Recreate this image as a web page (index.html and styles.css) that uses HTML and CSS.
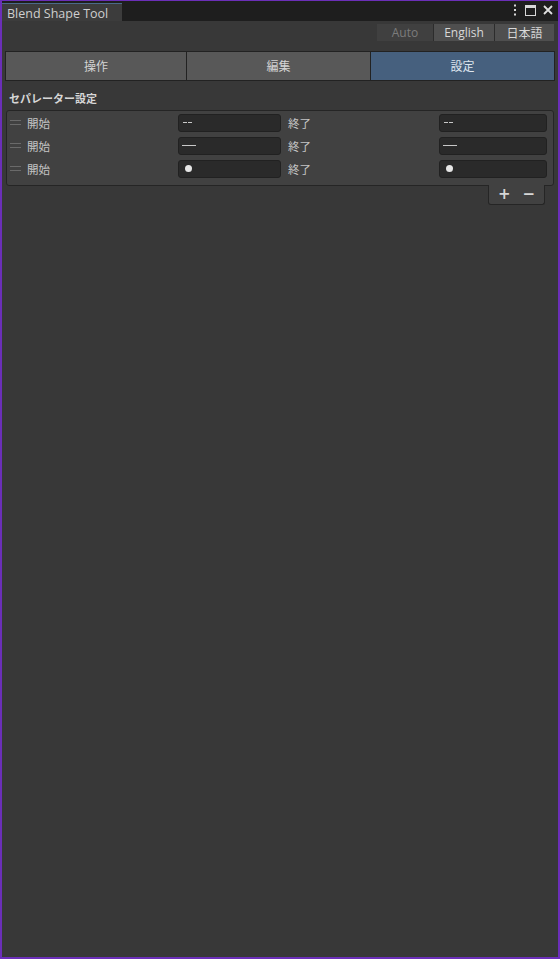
FILE: index.html
```html
<!DOCTYPE html>
<html lang="ja">
<head>
<meta charset="utf-8">
<title>Blend Shape Tool</title>
<link rel="stylesheet" href="styles.css">
</head>
<body>
<div class="window">
  <div class="titlebar">
    <div class="tab">Blend Shape Tool</div>
    <div class="win-icons">
      <svg class="ic" width="6" height="12" viewBox="0 0 6 12"><rect x="2" y="0.5" width="2" height="2" fill="#d8d8d8"/><rect x="2" y="5" width="2" height="2" fill="#d8d8d8"/><rect x="2" y="9.5" width="2" height="2" fill="#d8d8d8"/></svg>
      <svg class="ic" width="11" height="11" viewBox="0 0 11 11"><rect x="0.5" y="0.5" width="10" height="10" fill="none" stroke="#d8d8d8"/><rect x="0.5" y="0.5" width="10" height="2.5" fill="#d8d8d8"/></svg>
      <svg class="ic" width="10" height="10" viewBox="0 0 10 10"><path d="M1 1 L9 9 M9 1 L1 9" stroke="#e0e0e0" stroke-width="1.8"/></svg>
    </div>
  </div>
  <div class="content">
    <div class="lang-row">
      <div class="lang">
        <span class="lang-btn lang-auto">Auto</span>
        <span class="lang-btn lang-en">English</span>
        <span class="lang-btn lang-ja">日本語</span>
      </div>
    </div>
    <div class="tabs">
      <div class="tabbtn">操作</div>
      <div class="tabbtn">編集</div>
      <div class="tabbtn active">設定</div>
    </div>
    <div class="section-title">セパレーター設定</div>
    <div class="list">
      <div class="row">
        <span class="handle"></span>
        <span class="label">開始</span>
        <span class="field"><span class="dash2"></span></span>
        <span class="label label2">終了</span>
        <span class="field"><span class="dash2"></span></span>
      </div>
      <div class="row">
        <span class="handle"></span>
        <span class="label">開始</span>
        <span class="field"><span class="dashlong"></span></span>
        <span class="label label2">終了</span>
        <span class="field"><span class="dashlong"></span></span>
      </div>
      <div class="row">
        <span class="handle"></span>
        <span class="label">開始</span>
        <span class="field"><span class="dot"></span></span>
        <span class="label label2">終了</span>
        <span class="field"><span class="dot"></span></span>
      </div>
    </div>
    <div class="list-footer">
      <div class="pm">
        <span class="pm-btn">+</span>
        <span class="pm-btn">−</span>
      </div>
    </div>
  </div>
</div>
</body>
</html>
```

FILE: styles.css
```css
* { box-sizing: border-box; }
html, body { margin: 0; padding: 0; background: #383838; }
body {
  font-family: "Noto Sans CJK JP", "Noto Sans", "DejaVu Sans", sans-serif;
  color: #c8c8c8;
}
.window {
  width: 560px;
  height: 959px;
  border: 2px solid #6b2fb8;
  border-top-width: 1px;
  background: #383838;
  display: flex;
  flex-direction: column;
  overflow: hidden;
}
.titlebar {
  height: 20px;
  background: #1e1e1e;
  display: flex;
  align-items: flex-end;
  justify-content: space-between;
}
.tab {
  width: 120px;
  height: 18px;
  background: #3c3c3c;
  border-top: 1px solid #4b6a8a;
  color: #cfcfcf;
  font-family: "Open Sans", "DejaVu Sans", sans-serif;
  font-size: 12.5px;
  line-height: 19px;
  padding-left: 5px;
  white-space: nowrap;
}
.win-icons {
  display: flex;
  align-items: center;
  gap: 7px;
  height: 20px;
  padding-right: 5px;
  padding-bottom: 2px;
}
.ic { display: block; }
.content {
  flex: 1;
  padding: 3px 3px 0 3px;
  display: flex;
  flex-direction: column;
}
.lang-row {
  display: flex;
  justify-content: flex-end;
  padding-right: 1px;
}
.lang {
  display: flex;
  height: 17px;
  gap: 1px;
  background: #2c2c2c;
}
.lang-btn {
  font-family: "Open Sans", "DejaVu Sans", sans-serif;
  font-size: 12px;
  line-height: 17px;
  text-align: center;
  color: #d8d8d8;
  background: #4f4f4f;
}
.lang-auto { width: 56px; background: #404040; color: #7c7c7c; }
.lang-en { width: 60px; }
.lang-ja { width: 59px; font-family: "Noto Sans CJK JP", sans-serif; }
.tabs {
  margin-top: 10px;
  display: flex;
  height: 30px;
  border: 1px solid #222;
  background: #222;
  gap: 1px;
}
.tabbtn {
  background: #585858;
  color: #d4d4d4;
  font-size: 12px;
  line-height: 28px;
  text-align: center;
}
.tabbtn:nth-child(1) { width: 180px; }
.tabbtn:nth-child(2) { width: 183px; }
.tabbtn.active { flex: 1; background: #46607e; color: #dfe6ee; }
.section-title {
  margin-top: 9px;
  margin-left: 4px;
  font-size: 11px;
  font-weight: bold;
  color: #d6d6d6;
  line-height: 17px;
}
.list {
  margin-top: 3px;
  margin-left: 1px;
  margin-right: 1px;
  height: 76px;
  background: #414141;
  border: 1px solid #252525;
  border-radius: 3px;
  padding-top: 0;
}
.row {
  display: grid;
  grid-template-columns: 17px 151px 103px 158px 108px;
  align-items: center;
  height: 23px;
  padding-left: 3px;
}
.handle {
  width: 11px;
  height: 5px;
  border-top: 1px solid #6a6a6a;
  border-bottom: 1px solid #6a6a6a;
}
.label {
  font-size: 11.5px;
  color: #c4c4c4;
  line-height: 16px;
}
.label2 { padding-left: 7px; }
.field {
  height: 18px;
  background: #2a2a2a;
  border: 1px solid #212121;
  border-radius: 3px;
  padding-left: 3px;
  display: flex;
  align-items: center;
}
.dash2 {
  display: inline-block;
  width: 9px;
  height: 1px;
  margin-left: 1px;
  background: linear-gradient(to right, #c8c8c8 0 4px, transparent 4px 5px, #c8c8c8 5px 9px);
}
.dashlong {
  display: inline-block;
  width: 14px;
  height: 1px;
  margin-left: 0;
  background: #c8c8c8;
}
.dot {
  display: inline-block;
  width: 7px;
  height: 7px;
  border-radius: 50%;
  background: #e6e6e6;
  margin-left: 3px;
}
.list-footer {
  display: flex;
  justify-content: flex-end;
  padding-right: 10px;
}
.pm {
  width: 57px;
  height: 20px;
  background: #414141;
  border: 1px solid #252525;
  border-top: none;
  border-radius: 0 0 3px 3px;
  display: flex;
  justify-content: center;
  gap: 12px;
  margin-top: -1px;
}
.pm-btn {
  font-family: "DejaVu Sans", sans-serif;
  font-size: 15px;
  font-weight: bold;
  line-height: 18px;
  color: #d6d6d6;
}
```
